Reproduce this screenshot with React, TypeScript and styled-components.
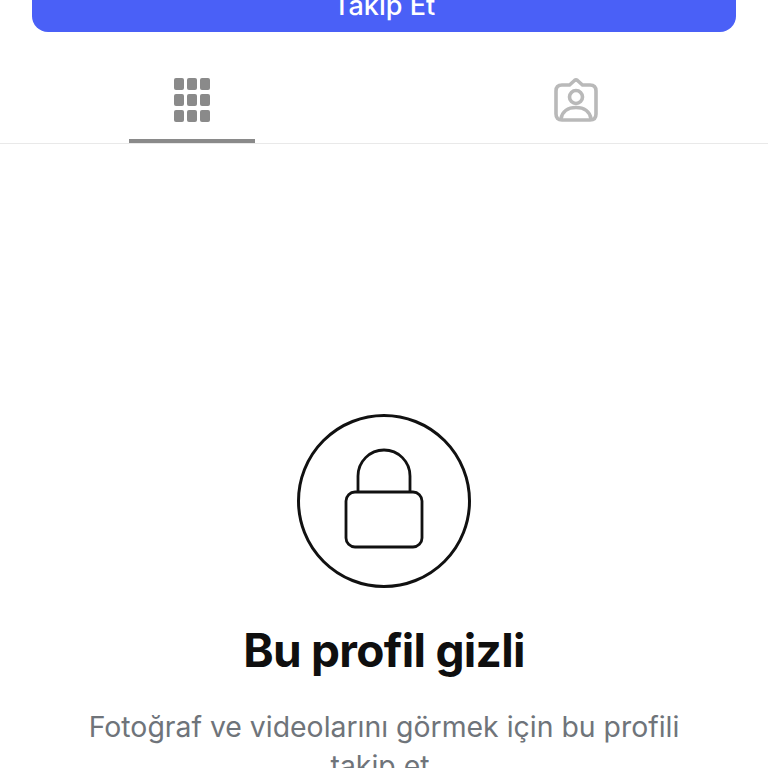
import styled, { createGlobalStyle } from 'styled-components';

const GlobalStyle = createGlobalStyle`
  html, body {
    margin: 0;
    padding: 0;
    height: 768px;
    overflow: hidden;
    background: #fff;
    font-family: Inter, "Liberation Sans", sans-serif;
  }
`;

const Page = styled.div`
  width: 768px;
  height: 768px;
  overflow: hidden;
  display: flex;
  flex-direction: column;
  background: #fff;
`;

const FollowButton = styled.button`
  flex: none;
  height: 56px;
  margin: -24px 32px 0;
  padding: 0;
  border: none;
  border-radius: 16px;
  background: #4a60f7;
  color: #fff;
  font-family: inherit;
  font-size: 27px;
  font-weight: 500;
  line-height: 60px;
`;

const Tabs = styled.div`
  flex: none;
  height: 112px;
  box-sizing: border-box;
  display: grid;
  grid-template-columns: 1fr 1fr;
  border-bottom: 1px solid #e9e9e9;
`;

const Tab = styled.div<{ $active?: boolean }>`
  position: relative;
  display: flex;
  align-items: center;
  justify-content: center;
  padding-top: 25px;
  box-sizing: border-box;
  height: 111px;

  &::after {
    content: '';
    display: ${(p) => (p.$active ? 'block' : 'none')};
    position: absolute;
    left: 129px;
    width: 126px;
    bottom: 0;
    height: 4px;
    background: #8a8a8a;
  }
`;

const GridIcon = styled.div`
  display: grid;
  grid-template-columns: repeat(3, 10px);
  grid-template-rows: repeat(3, 12px);
  column-gap: 3px;
  row-gap: 4px;
`;

const GridCell = styled.span`
  background: #8a8a8a;
  border-radius: 2px;
`;

const TagIcon = styled.svg`
  display: block;
  width: 44px;
  height: 44px;
  fill: none;
  stroke: #b9b9b9;
  stroke-width: 3.6;
`;

const Content = styled.div`
  display: flex;
  flex-direction: column;
  align-items: center;
  padding-top: 270px;
`;

const LockCircle = styled.div`
  width: 174px;
  height: 174px;
  box-sizing: border-box;
  border: 3px solid #111;
  border-radius: 50%;
  display: flex;
  align-items: center;
  justify-content: center;
`;

const LockIcon = styled.svg`
  display: block;
  width: 80px;
  height: 110px;
  fill: none;
  stroke: #111;
  stroke-width: 2.8;
`;

const Title = styled.h1`
  margin: 36px 0 0;
  font-size: 46px;
  line-height: 52px;
  font-weight: 700;
  letter-spacing: -0.7px;
  color: #0f0f0f;
`;

const Description = styled.p`
  margin: 31px 0 0;
  width: 620px;
  text-align: center;
  font-size: 28.4px;
  line-height: 39px;
  font-weight: 400;
  color: #6f747a;
`;

const cells = Array.from({ length: 9 }, (_, i) => i);

const App = () => {
  return (
    <Page>
      <GlobalStyle />
      <FollowButton>Takip Et</FollowButton>
      <Tabs>
        <Tab $active>
          <GridIcon>
            {cells.map((c) => (
              <GridCell key={c} />
            ))}
          </GridIcon>
        </Tab>
        <Tab>
          <TagIcon viewBox="0 0 44 44">
            <path d="M8 7h7.500l5-4.500q1.500-1.200 3 0l5 4.500H36q6 0 6 6v23q0 6-6 6H8q-6 0-6-6V13q0-6 6-6Z" />
            <circle cx="22" cy="19" r="6.500" />
            <path d="M7 41c1-7.500 7-11.500 15-11.500S36 33.500 37 41" />
          </TagIcon>
        </Tab>
      </Tabs>
      <Content>
        <LockCircle>
          <LockIcon viewBox="0 0 80 110">
            <path d="M14 46V30a26 26 0 0 1 52 0v16" />
            <rect x="2" y="46" width="76" height="55" rx="9" />
          </LockIcon>
        </LockCircle>
        <Title>Bu profil gizli</Title>
        <Description>Fotoğraf ve videolarını görmek için bu profili takip et&nbsp;</Description>
      </Content>
    </Page>
  );
};

export default App;
